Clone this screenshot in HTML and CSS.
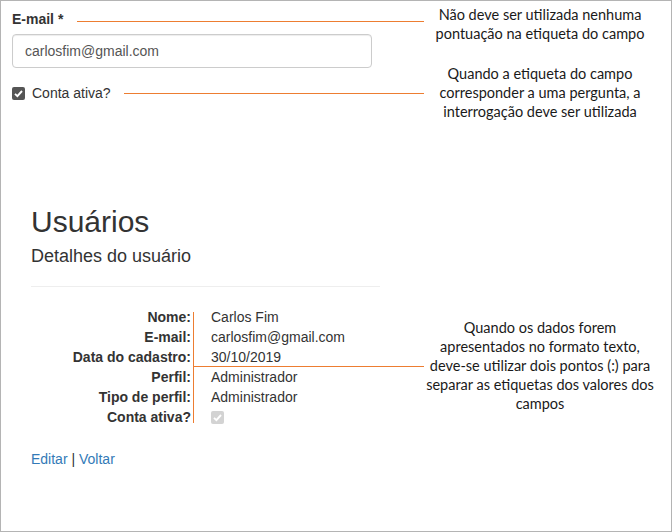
FILE: index.html
```html
<!DOCTYPE html>
<html lang="pt-BR">
<head>
<meta charset="utf-8">
<title>Padrões de etiquetas</title>
<link rel="stylesheet" href="styles.css">
</head>
<body>
<div class="frame">
  <section class="top">
    <div class="form-col">
      <div class="label-row">
        <label class="field-label" for="email">E-mail *</label>
        <span class="connector connector-label"></span>
      </div>
      <input class="text-input" id="email" type="text" value="carlosfim@gmail.com">
      <div class="check-row">
        <span class="check-box"><svg viewBox="0 0 13 13" width="13" height="13"><path d="M3 6.8 L5.4 9.2 L10 4" fill="none" stroke="#fff" stroke-width="1.9"/></svg></span>
        <span class="check-label">Conta ativa?</span>
        <span class="connector connector-check"></span>
      </div>
    </div>
    <div class="notes-col">
      <p class="note note-1">Não deve ser utilizada nenhuma<br>pontuação na etiqueta do campo</p>
      <p class="note note-2">Quando a etiqueta do campo<br>corresponder a uma pergunta, a<br>interrogação deve ser utilizada</p>
    </div>
  </section>

  <section class="details">
    <div class="details-main">
      <h2 class="page-title">Usuários</h2>
      <h4 class="page-subtitle">Detalhes do usuário</h4>
      <hr class="rule">
      <div class="dl-wrap">
        <dl class="dl-horizontal">
          <dt>Nome:</dt><dd>Carlos Fim</dd>
          <dt>E-mail:</dt><dd>carlosfim@gmail.com</dd>
          <dt>Data do cadastro:</dt><dd>30/10/2019</dd>
          <dt>Perfil:</dt><dd>Administrador</dd>
          <dt>Tipo de perfil:</dt><dd>Administrador</dd>
          <dt>Conta ativa?</dt><dd><span class="check-box check-disabled"><svg viewBox="0 0 13 13" width="13" height="13"><path d="M3 6.8 L5.4 9.2 L10 4" fill="none" stroke="#fff" stroke-width="1.9"/></svg></span></dd>
        </dl>
        <span class="mark-vertical"></span>
        <span class="mark-horizontal"></span>
      </div>
      <p class="actions"><a href="#">Editar</a> | <a href="#">Voltar</a></p>
    </div>
    <div class="details-notes">
      <p class="note note-3">Quando os dados forem<br>apresentados no formato texto,<br>deve-se utilizar dois pontos (:) para<br>separar as etiquetas dos valores dos<br>campos</p>
    </div>
  </section>
</div>
</body>
</html>
```

FILE: styles.css
```css
* { box-sizing: border-box; }

html, body {
  margin: 0;
  padding: 0;
  background: #fff;
}

.frame {
  width: 672px;
  height: 532px;
  border: 1px solid #b4b4b4;
  font-family: "Liberation Sans", Arial, sans-serif;
  font-size: 14px;
  color: #333;
  overflow: hidden;
}

/* ---------- top form area ---------- */
.top {
  display: flex;
  height: 184px;
}

.form-col {
  width: 423px;
  padding-left: 11px;
  padding-top: 8px;
}

.label-row {
  display: flex;
  align-items: center;
  height: 20px;
}

.field-label {
  font-weight: bold;
  line-height: 20px;
}

.connector {
  flex: 1;
  height: 1px;
  background: #ed7d31;
}

.connector-label {
  margin-left: 14px;
  margin-top: 4px;
}

.text-input {
  display: block;
  margin-top: 5px;
  width: 360px;
  height: 34px;
  border: 1px solid #ccc;
  border-radius: 4px;
  padding: 6px 12px;
  font-family: "Liberation Sans", Arial, sans-serif;
  font-size: 14px;
  color: #555;
  box-shadow: inset 0 1px 1px rgba(0,0,0,.075);
}

.check-row {
  display: flex;
  align-items: center;
  height: 20px;
  margin-top: 15px;
}

.check-box {
  display: inline-flex;
  width: 13px;
  height: 13px;
  border-radius: 2px;
  background: #555;
  flex: none;
}

.check-box svg { display: block; }

.check-label {
  margin-left: 7px;
  line-height: 20px;
}

.connector-check {
  margin-left: 13px;
}

.notes-col {
  width: 232px;
}

.note {
  margin: 0;
  font-family: Lato, "Open Sans", sans-serif;
  font-size: 14.5px;
  line-height: 19px;
  text-align: center;
  color: #1a1a1a;
}

.note-1 { margin-top: 4px; }
.note-2 { margin-top: 21px; }

/* ---------- details area ---------- */
.details {
  display: flex;
  padding-left: 30px;
}

.details-main {
  width: 349px;
}

.page-title {
  margin: 20px 0 0;
  font-size: 30px;
  font-weight: normal;
  line-height: 33px;
  color: #333;
}

.page-subtitle {
  margin: 8px 0 0;
  font-size: 18px;
  font-weight: normal;
  line-height: 20px;
  color: #333;
}

.rule {
  margin: 20px 0 0;
  border: 0;
  border-top: 1px solid #eee;
  height: 0;
}

.dl-wrap {
  position: relative;
  margin-top: 20px;
}

.dl-horizontal {
  display: grid;
  grid-template-columns: 160px 1fr;
  column-gap: 20px;
  margin: 0;
  line-height: 20px;
}

.dl-horizontal dt {
  font-weight: bold;
  text-align: right;
  white-space: nowrap;
}

.dl-horizontal dd {
  margin: 0;
  display: flex;
  align-items: center;
  min-height: 20px;
}

.check-disabled {
  background: #d3d3d3;
  width: 13px;
  height: 13px;
  margin-top: 1px;
}

.mark-vertical {
  position: absolute;
  left: 162px;
  top: 5px;
  width: 1px;
  height: 111px;
  background: #ed7d31;
}

.mark-horizontal {
  position: absolute;
  left: 162px;
  top: 59px;
  width: 231px;
  height: 1px;
  background: #ed7d31;
}

.actions {
  margin: 22px 0 0;
  line-height: 20px;
}

.actions a {
  color: #337ab7;
  text-decoration: none;
}

.details-notes {
  width: 232px;
  margin-left: 44px;
}

.note-3 {
  margin-top: 133px;
}
```
